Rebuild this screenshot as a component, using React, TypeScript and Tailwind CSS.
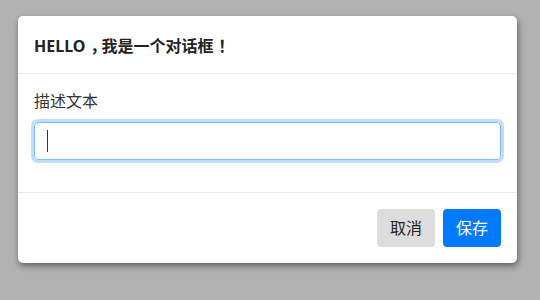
import React from "react";

export default function App() {
  return (
    <div
      className="w-[540px] h-[300px] bg-[#b1b1b1] pt-4 pl-[18px] overflow-hidden"
      style={{ fontFamily: '"Noto Sans", "Noto Sans CJK SC", sans-serif' }}
    >
      <div className="w-[499px] bg-white rounded-[5px] shadow-[1px_3px_6px_rgba(0,0,0,0.45)] flex flex-col">
        <div className="h-[58px] px-4 pt-[19px] border-b border-[#e9e9e9]">
          <h5 className="text-[16px] leading-[22px] font-bold text-[#222] whitespace-nowrap">
            HELLO<span className="pl-[0.3em] tracking-[-0.3em]">，</span>我是一个对话框<span className="pl-[0.3em]">！</span>
          </h5>
        </div>
        <div className="px-4 pt-4 pb-4">
          <div className="text-[16px] leading-[22px] text-[#333] mb-[10px]">描述文本</div>
          <div className="h-[38px] w-full rounded-[4px] border border-[#80bdff] shadow-[0_0_0_3px_rgba(0,123,255,0.25)] flex items-center pl-3 mb-4">
            <span className="block w-px h-[22px] bg-[#333]" />
          </div>
        </div>
        <div className="h-[71px] border-t border-[#e9e9e9] px-4 pt-4 flex justify-end gap-2">
          <button className="h-[38px] px-[13px] rounded-[4px] bg-[#dddddd] text-[#222] text-[16px] leading-[22px]">取消</button>
          <button className="h-[38px] px-[13px] rounded-[4px] bg-[#007bff] text-white text-[16px] leading-[22px]">保存</button>
        </div>
      </div>
    </div>
  );
}
